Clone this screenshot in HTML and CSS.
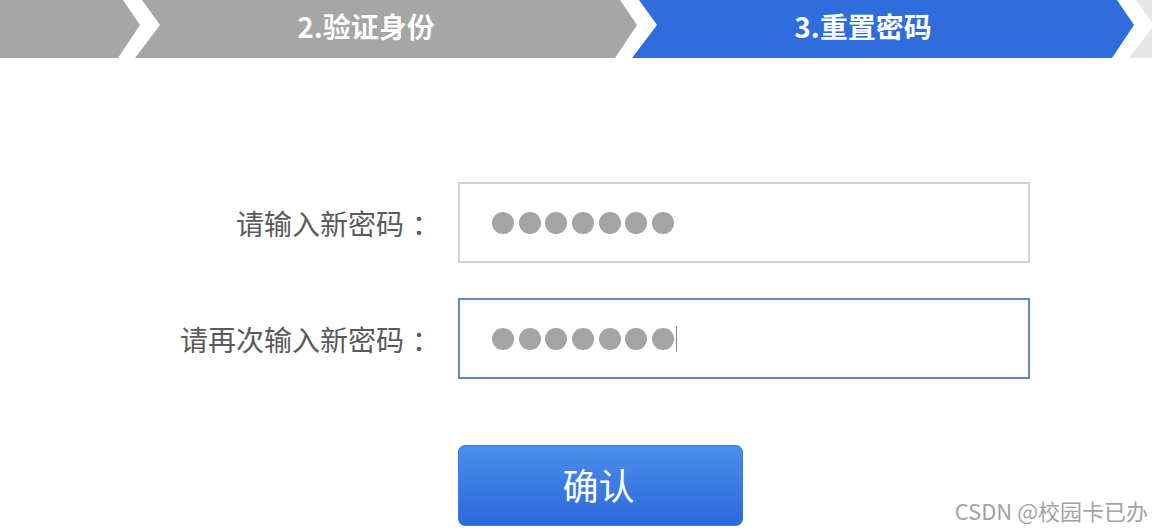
FILE: index.html
```html
<!DOCTYPE html>
<html lang="zh-CN">
<head>
    <meta charset="UTF-8">
    <meta name="viewport" content="width=device-width, initial-scale=1.0">
    <title>找回密码 - 重置密码</title>
    <link rel="stylesheet" href="styles.css">
</head>
<body>
    <!-- Step bar -->
    <div class="steps">
        <div class="step done"></div>
        <div class="step done"><span>2.验证身份</span></div>
        <div class="step active"><span>3.重置密码</span></div>
        <div class="step todo"></div>
    </div>

    <form class="reset-form" id="resetForm">
        <div class="row">
            <label class="label">请输入新密码<span class="colon">：</span></label>
            <div class="field">
                <span class="dot"></span><span class="dot"></span><span class="dot"></span><span class="dot"></span><span class="dot"></span><span class="dot"></span><span class="dot"></span>
            </div>
        </div>

        <div class="row">
            <label class="label">请再次输入新密码<span class="colon">：</span></label>
            <div class="field focused">
                <span class="dot"></span><span class="dot"></span><span class="dot"></span><span class="dot"></span><span class="dot"></span><span class="dot"></span><span class="dot"></span><span class="caret"></span>
            </div>
        </div>

        <button type="submit" class="submit">确认</button>
    </form>

    <div class="watermark">CSDN @校园卡已办</div>
</body>
</html>
```

FILE: styles.css
```css
* {
    box-sizing: border-box;
    margin: 0;
    padding: 0;
}

body {
    font-family: "Noto Sans CJK SC", "Noto Sans", sans-serif;
    background-color: #fff;
    width: 1152px;
    height: 532px;
    overflow: hidden;
    position: relative;
}

/* Step bar */
.steps {
    display: flex;
    height: 58px;
    overflow: hidden;
}

.step {
    flex: 0 0 502px;
    margin-right: -5px;
    height: 58px;
    display: flex;
    align-items: center;
    justify-content: center;
    padding: 0 40px 7px 0;
    clip-path: polygon(7px 0, 485px 0, 502px 25px, 480px 58px, 0 58px, 25px 25px);
    color: #fff;
    font-size: 28px;
    font-weight: 700;
}

.step:first-child {
    margin-left: -362px;
}

.step span {
    text-shadow: 0 0 1px rgba(0, 0, 0, 0.15);
}

.done {
    background: #a6a6a6;
}

.active {
    background: #2e6ddb;
}

.todo {
    background: #e6e6e6;
}

/* Form */
.reset-form {
    margin-top: 124px;
}

.row {
    display: grid;
    grid-template-columns: 440px 572px;
    column-gap: 18px;
    align-items: center;
    height: 81px;
    margin-bottom: 35px;
}

.label {
    text-align: right;
    font-size: 28px;
    color: #5a5a5a;
    padding-right: 0;
}

.colon {
    margin-left: 8px;
}

.field {
    height: 81px;
    border: 2px solid #d2d2d2;
    display: flex;
    align-items: center;
    gap: 4.7px;
    padding-left: 32px;
    background: #fff;
}

.field.focused {
    border-color: #6787b9;
}

.dot {
    width: 22px;
    height: 22px;
    border-radius: 50%;
    background: #a4a4a4;
}

.caret {
    width: 1px;
    height: 26px;
    background: #8a8a8a;
    margin-left: -3px;
}

.submit {
    display: flex;
    align-items: center;
    justify-content: center;
    margin: 66px 0 0 458px;
    width: 285px;
    height: 81px;
    border: 1px solid #3a78de;
    border-radius: 7px;
    background: linear-gradient(#4a8eec, #2b69d9);
    color: #fff;
    font-family: inherit;
    font-size: 36px;
    padding: 0 4px 4px 0;
    cursor: pointer;
}

.watermark {
    position: absolute;
    right: 4px;
    bottom: 6px;
    font-size: 22px;
    color: #a3a3a3;
}
```
